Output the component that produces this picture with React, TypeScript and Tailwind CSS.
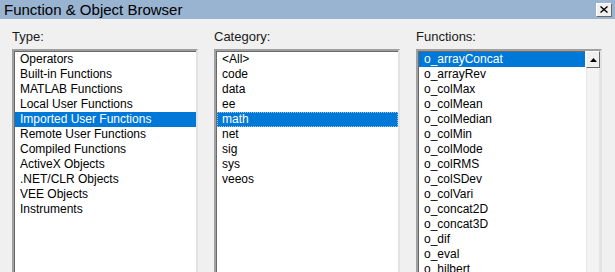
import React from "react"

const types = [
  "Operators",
  "Built-in Functions",
  "MATLAB Functions",
  "Local User Functions",
  "Imported User Functions",
  "Remote User Functions",
  "Compiled Functions",
  "ActiveX Objects",
  ".NET/CLR Objects",
  "VEE Objects",
  "Instruments",
]

const categories = ["<All>", "code", "data", "ee", "math", "net", "sig", "sys", "veeos"]

const functions = [
  "o_arrayConcat",
  "o_arrayRev",
  "o_colMax",
  "o_colMean",
  "o_colMedian",
  "o_colMin",
  "o_colMode",
  "o_colRMS",
  "o_colSDev",
  "o_colVari",
  "o_concat2D",
  "o_concat3D",
  "o_dif",
  "o_eval",
  "o_hilbert",
]

function ListBox({ items, selected, focus, scroll }: { items: string[]; selected: number; focus?: boolean; scroll?: boolean }) {
  return (
    <div className="flex h-[240px] border-2 border-t-[#a0a0a0] border-l-[#a0a0a0] border-r-[#e3e3e3] border-b-white bg-white shadow-[inset_1px_1px_0_#696969]">
      <div className="flex-1 overflow-hidden pt-[1px] pl-[1px]">
        {items.map((t, i) => (
          <div
            key={t}
            className={
              "h-[15px] whitespace-nowrap pl-[5px] text-[12px] leading-[15px] " +
              (i === selected
                ? "bg-[#0078d7] text-white" + (focus ? " outline-1 outline-dotted outline-offset-[-1px] outline-[#9cc4ee]" : "")
                : "text-black")
            }
          >
            {t}
          </div>
        ))}
      </div>
      {scroll && (
        <div className="flex w-[15px] flex-col border-l border-white bg-[#f0f0f0]">
          <div className="flex h-[17px] items-center justify-center border border-t-white border-l-white border-r-[#696969] border-b-[#696969] bg-[#f0f0f0]">
            <svg width="7" height="4" viewBox="0 0 7 4">
              <path d="M3.5 0L7 4H0z" fill="#000" />
            </svg>
          </div>
          <div className="flex-1 border-x border-[#e6e6e6] bg-[#f3f3f3]" />
        </div>
      )}
    </div>
  )
}

export default function App() {
  return (
    <div className="h-[272px] w-[615px] overflow-hidden bg-[#f0f0f0] font-['Liberation_Sans',Arial,sans-serif]">
      <div className="flex h-[19px] items-center justify-between bg-[#99b4d1] pl-[4px] pr-[3px]">
        <span className="font-['Liberation_Sans_Narrow','Arial_Narrow',sans-serif] text-[15px] leading-none text-black">
          Function &amp; Object Browser
        </span>
        <div className="flex h-[14px] w-[16px] items-center justify-center border border-t-white border-l-white border-r-[#696969] border-b-[#696969] bg-[#f0f0f0]">
          <svg width="8" height="7" viewBox="0 0 8 7">
            <path d="M0.5 0.5L7.5 6.5M7.5 0.5L0.5 6.5" stroke="#000" strokeWidth="1.4" />
          </svg>
        </div>
      </div>
      <div className="grid grid-cols-3 gap-[16px] pl-[12px] pr-[13px] pt-[11px]">
        <div>
          <div className="mb-[5px] h-[14px] text-[13px] leading-[14px] text-[#1a1a1a]">Type:</div>
          <ListBox items={types} selected={4} />
        </div>
        <div>
          <div className="mb-[5px] h-[14px] text-[13px] leading-[14px] text-[#1a1a1a]">Category:</div>
          <ListBox items={categories} selected={4} focus />
        </div>
        <div>
          <div className="mb-[5px] h-[14px] text-[13px] leading-[14px] text-[#1a1a1a]">Functions:</div>
          <ListBox items={functions} selected={0} scroll />
        </div>
      </div>
    </div>
  )
}
